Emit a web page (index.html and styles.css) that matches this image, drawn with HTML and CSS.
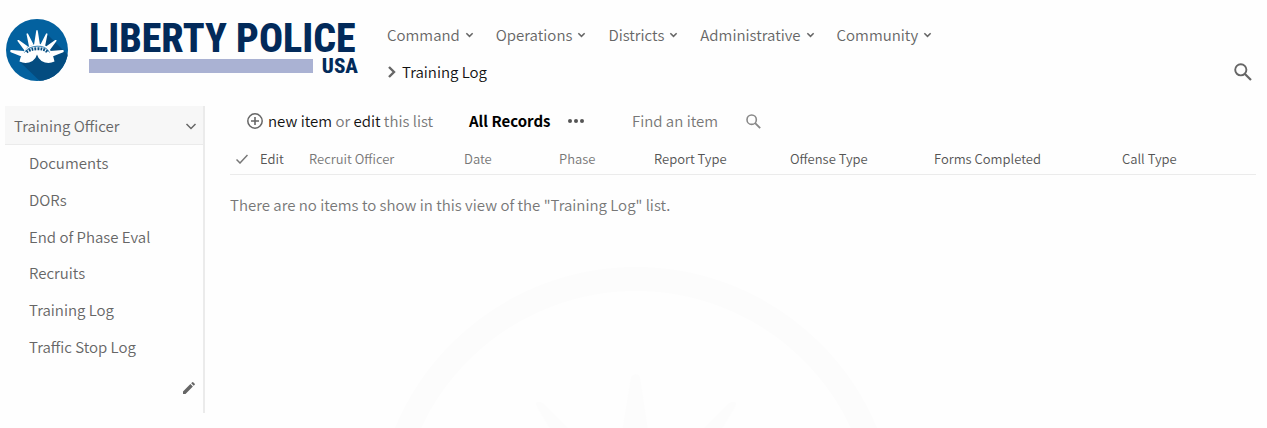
FILE: index.html
```
<!DOCTYPE html>
<html lang="en">
<head>
<meta charset="utf-8">
<title>Training Log</title>
<link rel="stylesheet" href="styles.css">
</head>
<body>
<svg class="defs" aria-hidden="true">
  <symbol id="chevron" viewBox="0 0 10 10"><path d="M1.500 3 5 6.500 8.500 3" fill="none" stroke="currentColor" stroke-width="1.700"/></symbol>
  <symbol id="search" viewBox="0 0 18 18"><circle cx="6.800" cy="6.800" r="5.600" fill="none" stroke="currentColor" stroke-width="1.900"/><path d="M11 11l6 6" stroke="currentColor" stroke-width="2.200"/></symbol>
</svg>
<svg class="watermark" viewBox="0 0 522 522" preserveAspectRatio="xMidYMin slice" aria-hidden="true">
  <circle cx="261" cy="261" r="249" fill="none" stroke="currentColor" stroke-width="24"/>
  <path fill="currentColor" d="M256 110q5-6 9 0l12 80h-34zM162 140q-4-8 6-4l60 60-20 20zM360 140q4-8-6-4l-60 60 20 20z"/>
</svg>
<header class="header">
  <a class="logo" href="#" aria-label="Liberty Police USA">
    <svg class="seal" viewBox="0 0 62 62" aria-hidden="true">
      <defs><clipPath id="disc"><circle cx="31" cy="31" r="31"/></clipPath></defs>
      <circle cx="31" cy="31" r="31" fill="#03619f"/>
      <path clip-path="url(#disc)" fill="#044c80" d="M42 16 66 40v26H38L14 43l17-8z"/>
      <g fill="#fff">
        <path d="M30.300 11.500q.7-1 1.400 0L34 26h-6z"/>
        <path d="M20.500 15q.4-1.300 1.500-.3L27.500 25.500l-4.500 2zM41.500 15q-.4-1.300-1.500-.3L34.500 25.500l4.500 2z"/>
        <path d="M11.300 21.800q.2-1.200 1.500-.7L22 27.500l-3.500 4zM50.700 21.800q-.2-1.200-1.500-.7L40 27.500l3.500 4z"/>
        <path d="M4.200 32q0-1.200 1.300-1L18 32 15.500 37.500 4.800 33.200Q4.200 32.800 4.200 32zM57.800 32q0-1.200-1.300-1L44 32 46.500 37.500 57.200 33.200Q57.800 32.800 57.800 32z"/>
        <path d="M13.500 42.500Q17 26 31 25t17.500 17.500Q42 45.500 35.500 42 32 39.500 31 35.500 30 39.500 26.500 42 20 45.500 13.500 42.500z"/>
      </g>
      <path d="M18.500 33.500Q22 27.800 31 27.200t12.500 6.300" fill="none" stroke="#03619f" stroke-width=".8"/>
      <path d="M20.500 33Q24 30 31 29.700t10.500 3.300" fill="none" stroke="#044c80" stroke-width="3" stroke-dasharray="1.800 1.100"/>
    </svg>
    <span class="brand">
      <span class="brand-name">LIBERTY POLICE</span>
      <span class="brand-line"><span class="brand-bar"></span><span class="brand-usa">USA</span></span>
    </span>
  </a>
  <div class="header-main">
    <nav class="nav" aria-label="Main">
      <a class="nav-link" href="#">Command<svg class="chevron"><use href="#chevron"/></svg></a>
      <a class="nav-link" href="#">Operations<svg class="chevron"><use href="#chevron"/></svg></a>
      <a class="nav-link" href="#">Districts<svg class="chevron"><use href="#chevron"/></svg></a>
      <a class="nav-link" href="#">Administrative<svg class="chevron"><use href="#chevron"/></svg></a>
      <a class="nav-link" href="#">Community<svg class="chevron"><use href="#chevron"/></svg></a>
    </nav>
    <div class="title-row">
      <svg class="crumb" viewBox="0 0 10 12" aria-hidden="true"><path d="M2 1l5 5-5 5" fill="none" stroke="#666" stroke-width="2.400"/></svg>
      <h1 class="title">Training Log</h1>
      <button class="icon-button site-search" type="button" aria-label="Search"><svg class="search-large"><use href="#search"/></svg></button>
    </div>
  </div>
</header>
<div class="body">
  <aside class="sidebar">
    <button class="side-head" type="button">Training Officer<svg class="side-chevron" viewBox="0 0 12 12"><path d="M1.500 4 6 8.500 10.500 4" fill="none" stroke="currentColor" stroke-width="1.500"/></svg></button>
    <nav class="side-nav" aria-label="Training Officer">
      <a class="side-link" href="#">Documents</a>
      <a class="side-link" href="#">DORs</a>
      <a class="side-link" href="#">End of Phase Eval</a>
      <a class="side-link" href="#">Recruits</a>
      <a class="side-link" href="#">Training Log</a>
      <a class="side-link" href="#">Traffic Stop Log</a>
    </nav>
    <button class="icon-button side-edit" type="button" aria-label="Edit links"><svg class="pencil" viewBox="0 0 12 12"><path fill="currentColor" d="M0 9.500 7.400 2.100l2.500 2.500L2.500 12H0zM8.200 1.300 9.200.3q.5-.5 1 0l1.500 1.500q.5.500 0 1l-1 1z"/></svg></button>
  </aside>
  <main class="content">
    <div class="toolbar">
      <div class="actions">
        <svg class="plus" viewBox="0 0 16 16" aria-hidden="true"><path d="M8 4v8M4 8h8" stroke="#666" stroke-width="1.600"/><circle cx="8" cy="8" r="7.200" fill="none" stroke="#666" stroke-width="1.500"/></svg>
        <span class="action-text"><a href="#">new item</a> or <a href="#">edit</a> this list</span>
      </div>
      <a class="view" href="#">All Records</a>
      <button class="icon-button" type="button" aria-label="More views"><svg class="dots" viewBox="0 0 16 16"><g fill="#555"><circle cx="2" cy="8" r="2"/><circle cx="8" cy="8" r="2"/><circle cx="14" cy="8" r="2"/></g></svg></button>
      <input class="find" type="text" placeholder="Find an item" aria-label="Find an item">
      <button class="icon-button find-button" type="button" aria-label="Find"><svg class="search-small" viewBox="0 0 18 18"><use href="#search"/></svg></button>
    </div>
    <table class="records">
      <colgroup><col class="c-check"><col class="c-edit"><col class="c-officer"><col class="c-date"><col class="c-phase"><col class="c-report"><col class="c-offense"><col class="c-forms"><col class="c-call"></colgroup>
      <thead>
        <tr>
          <th class="check-cell"><svg class="check" viewBox="0 0 12 10" aria-label="Select"><path d="M.500 5.500 4 9l7.500-8" fill="none" stroke="currentColor" stroke-width="1.500"/></svg></th>
          <th class="strong">Edit</th><th>Recruit Officer</th><th>Date</th><th>Phase</th>
          <th class="strong">Report Type</th><th class="strong">Offense Type</th><th class="strong">Forms Completed</th><th class="strong">Call Type</th>
        </tr>
      </thead>
    </table>
    <p class="empty">There are no items to show in this view of the "Training Log" list.</p>
  </main>
</div>
</body>
</html>
```
FILE: styles.css
```
* { box-sizing: border-box; }
body {
  margin: 0;
  min-height: 100vh;
  position: relative;
  background: #fefefe;
  color: #666;
  font: 350 15px/20px "Noto Sans CJK SC", "Noto Sans", sans-serif;
}
a { color: inherit; text-decoration: none; }
svg { display: block; flex: none; }
button, input { font: inherit; color: inherit; background: none; border: 0; padding: 0; margin: 0; }
.defs { position: absolute; width: 0; height: 0; }
.watermark {
  position: absolute;
  z-index: -1;
  top: 267px;
  left: calc(50% - 259px);
  width: 522px;
  height: calc(100% - 267px);
  color: #fcfcfc;
}
.header { display: flex; padding: 19px 15px 0 6px; height: 106px; }
.logo { display: flex; width: 381px; flex: none; }
.seal { width: 62px; height: 62px; }
.brand { display: flex; flex-direction: column; width: 269px; margin-left: 21px; color: #022a5a; font-family: "Roboto Condensed", "Liberation Sans Narrow", Roboto, sans-serif; font-weight: 800; }
.brand-name { font-size: 40px; line-height: 40px; white-space: nowrap; }
.brand-line { display: flex; justify-content: space-between; align-items: center; height: 14px; }
.brand-bar { width: 224px; height: 14px; background: #aab2d3; }
.brand-usa { font-size: 21px; line-height: 14px; }
.header-main { flex: 1; }
.nav { display: flex; gap: 22px; padding-top: 6px; }
.nav-link { display: flex; align-items: center; gap: 5px; }
.chevron { width: 9px; height: 10px; }
.title-row { display: flex; align-items: center; margin-top: 17px; }
.crumb { width: 10px; height: 12px; margin-right: 5px; }
.title { margin: 0; color: #111; font: inherit; }
.icon-button { display: flex; cursor: pointer; }
.site-search { margin-left: auto; }
.search-large { width: 18px; height: 18px; }
.body { display: flex; padding: 0 11px 0 5px; }
.sidebar { width: 200px; height: 307px; flex: none; border-right: 2px solid #ebebeb; }
.side-head { display: flex; width: 100%; height: 39px; padding: 2px 6px 0 9px; align-items: center; justify-content: space-between; background: #f7f7f7; border-bottom: 1px solid #ebebeb; }
.side-chevron { width: 12px; height: 12px; }
.side-nav { display: grid; height: 220px; grid-auto-rows: 1fr; align-items: center; }
.side-link { padding-left: 24px; }
.side-edit { margin: 17px 8px 0 auto; }
.pencil { width: 12px; height: 12px; }
.content { flex: 1; padding-left: 25px; min-width: 0; }
.toolbar { display: flex; align-items: center; height: 30px; padding-left: 17px; }
.actions { display: flex; align-items: center; gap: 5px; width: 222px; color: #777; }
.actions a { color: #111; }
.plus { width: 16px; height: 16px; }
.view { width: 99px; color: #000; font-weight: 700; }
.dots { width: 16px; height: 16px; }
.find { width: 114px; margin-left: 48px; outline: 0; }
.find::placeholder { color: #777; opacity: 1; }
.search-small { width: 15px; height: 15px; color: #888; }
.records { width: 100%; margin-top: 8px; border-collapse: collapse; table-layout: fixed; }
.records th { height: 30px; padding: 0; border-bottom: 1px solid #ebebeb; text-align: left; font-size: 13px; line-height: 20px; font-weight: inherit; color: #777; }
.records .strong { color: #555; }
.records .check-cell { padding-left: 6px; }
.check { width: 12px; height: 10px; }
.c-check { width: 30px; }
.c-edit { width: 49px; }
.c-officer { width: 155px; }
.c-date, .c-phase { width: 95px; }
.c-report { width: 136px; }
.c-offense { width: 144px; }
.c-forms { width: 188px; }
.c-call { width: 134px; }
.empty { margin: 20px 0 0; color: #777; }
```
